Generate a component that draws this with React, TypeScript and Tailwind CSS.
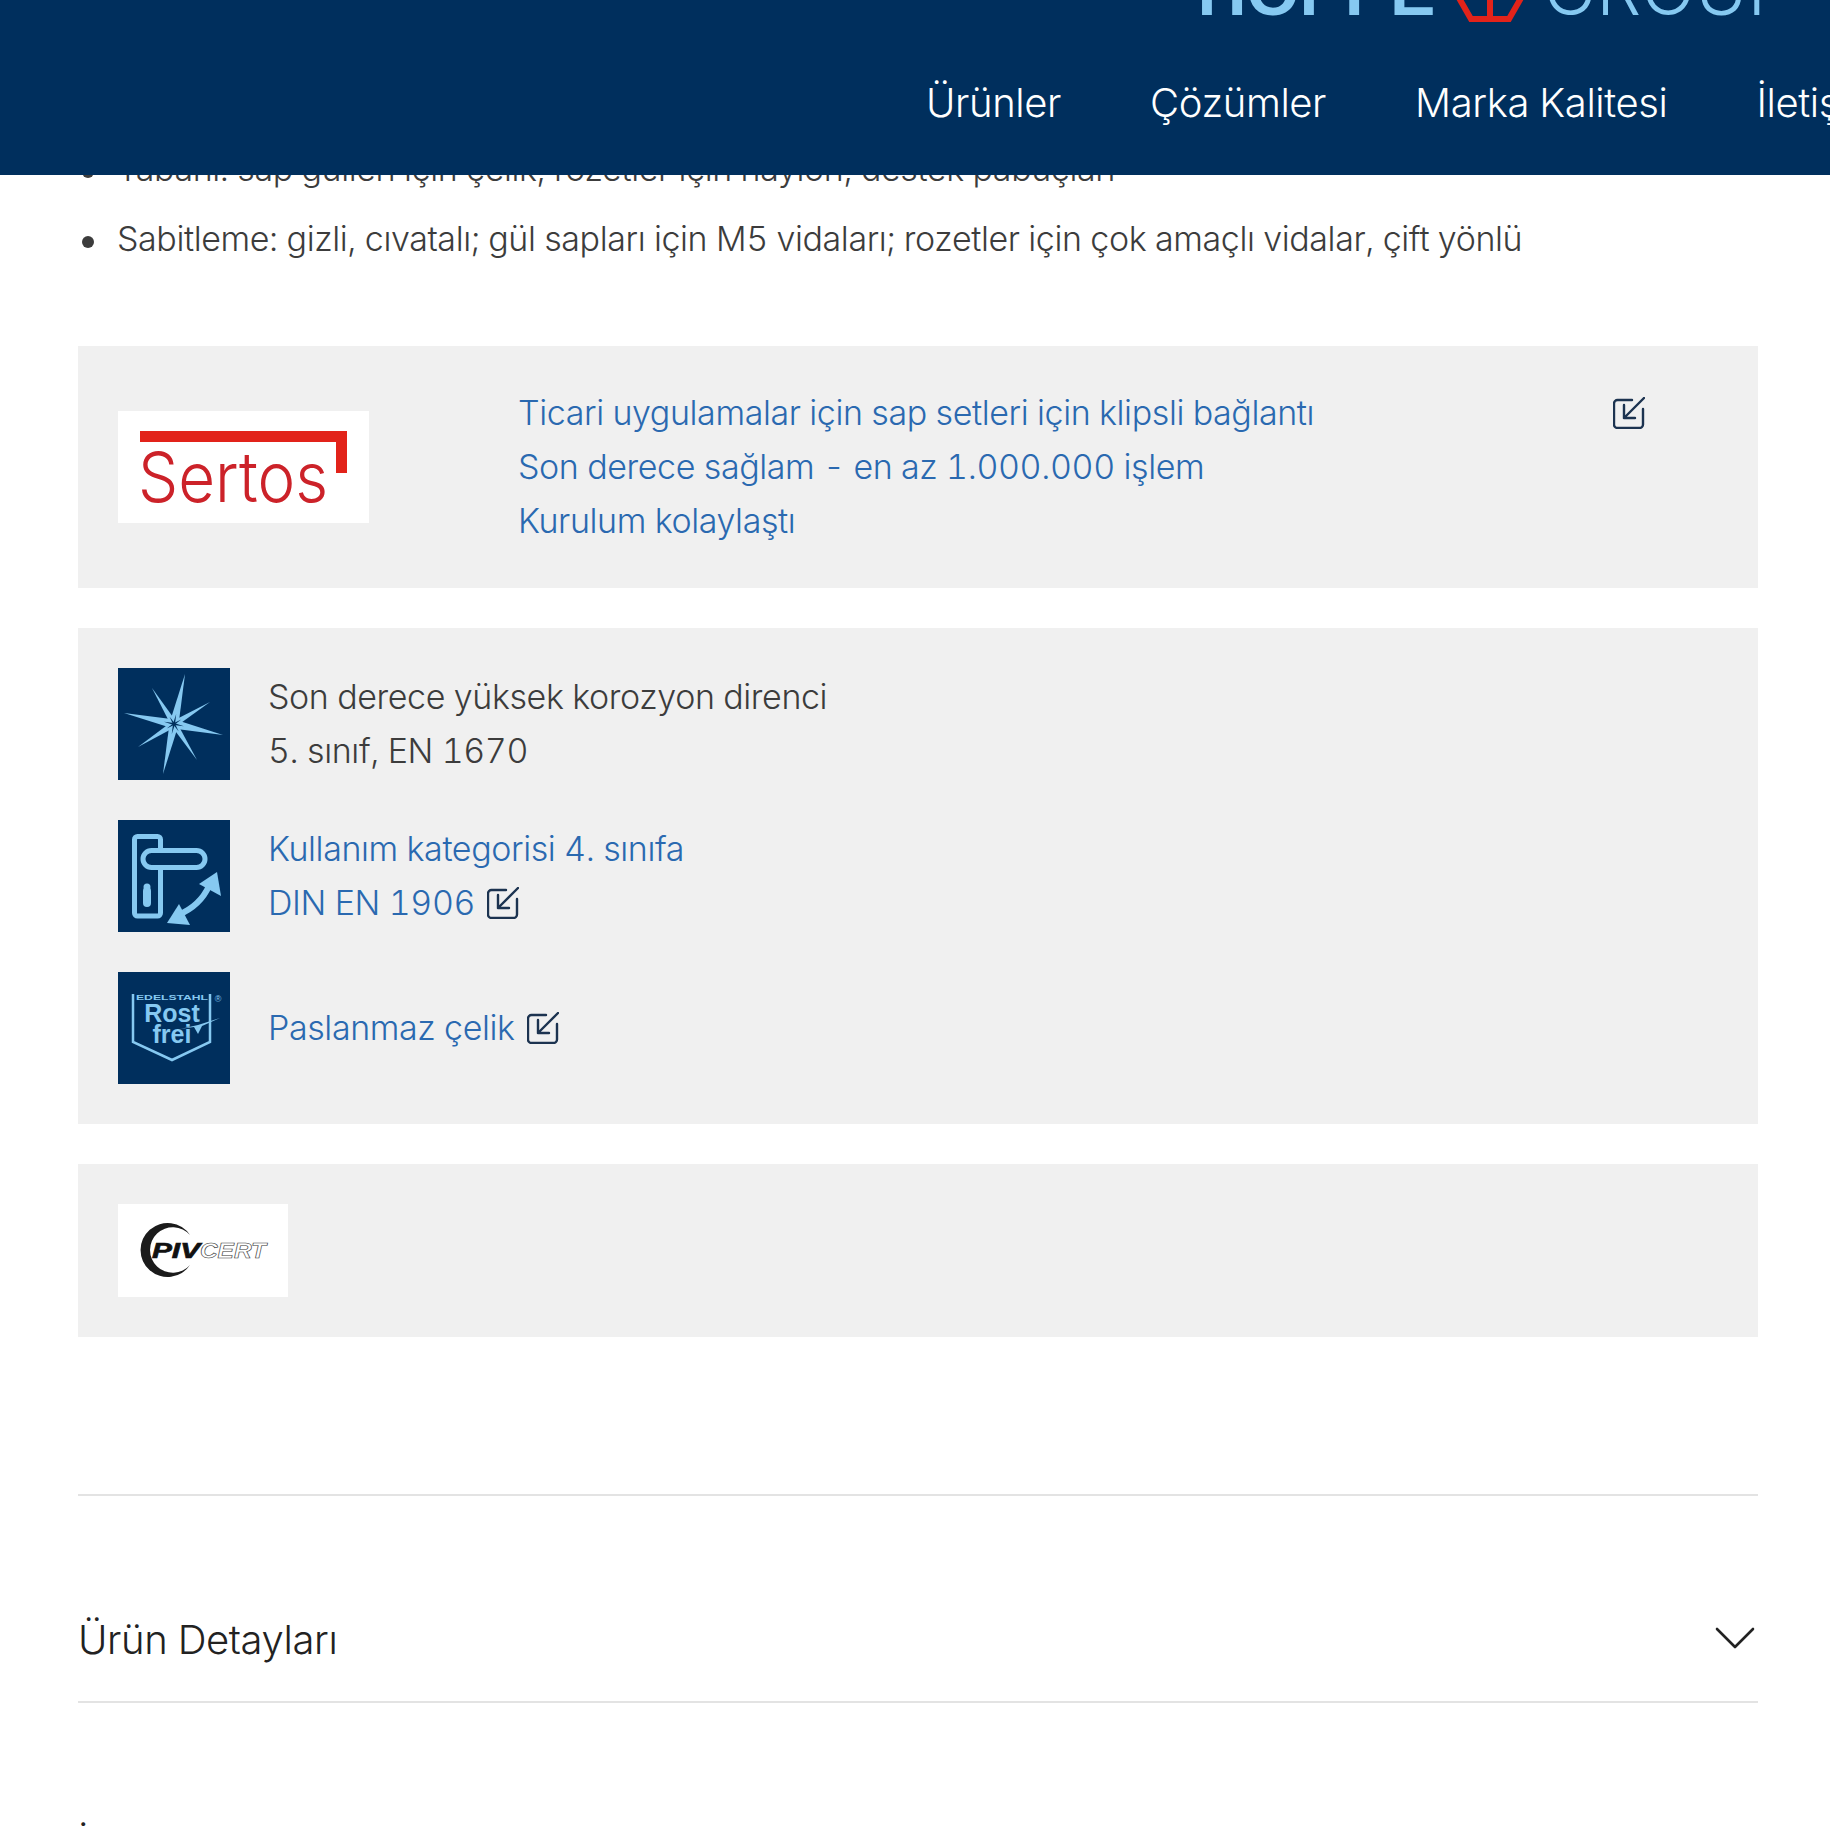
const bodyFont = "font-['Inter',sans-serif] font-light tracking-[-0.025em] tabular-nums"

function LinkIcon({ className = '' }: { className?: string }) {
  return (
    <svg viewBox="0 0 32 32" className={`h-8 w-8 shrink-0 ${className}`} fill="none" stroke="#1c3350" strokeWidth="2.4" strokeLinecap="round" strokeLinejoin="round">
      <path d="M19 3H4.500A3.500 3.500 0 0 0 1 6.500V27.500A3.500 3.500 0 0 0 4.500 31H26.500A3.500 3.500 0 0 0 30 27.500V12" />
      <path d="M31 1L11 21M11 8V21H22" />
    </svg>
  )
}

function SertosLogo() {
  return (
    <div className="h-[112px] w-[251px] shrink-0 bg-white tracking-normal">
      <svg viewBox="0 0 251 112" className="h-full w-full">
        <path d="M22 20H229V62H218V31H22Z" fill="#e2231a" />
        <text x="20" y="91" fontSize="70" fontFamily="Inter, sans-serif" fontWeight="300" fill="#cc2229" textLength="190" lengthAdjust="spacingAndGlyphs">Sertos</text>
      </svg>
    </div>
  )
}

function StarIcon() {
  const tips: [number, number, number][] = [
    [67, 6, 4.6],
    [92, 34, 3.2],
    [105, 67, 4.6],
    [79, 92, 3.2],
    [45, 106, 4.6],
    [20, 79, 3.2],
    [6, 45, 4.6],
    [34, 20, 3.2],
  ]
  const spike = (x: number, y: number, w: number, scale: number) => {
    const dx = x - 56
    const dy = y - 56
    const len = Math.hypot(dx, dy)
    const nx = (-dy / len) * w
    const ny = (dx / len) * w
    return `${56 + dx * scale},${56 + dy * scale} ${56 + nx},${56 + ny} ${56 - nx},${56 - ny}`
  }
  return (
    <div className="h-[112px] w-[112px] shrink-0 bg-[#002f5d]">
      <svg viewBox="0 0 112 112" className="h-full w-full">
        {tips.map(([x, y, w]) => (
          <polygon key={`${x}-${y}`} points={spike(x, y, w, 1)} fill="#86c9f1" />
        ))}
        {tips.map(([x, y]) => (
          <polygon key={`d${x}-${y}`} points={spike(x, y, 1, 0.2)} fill="#002f5d" />
        ))}
      </svg>
    </div>
  )
}

function HandleIcon() {
  return (
    <div className="h-[112px] w-[112px] shrink-0 bg-[#002f5d]">
      <svg viewBox="0 0 112 112" className="h-full w-full" fill="none" stroke="#86c9f1" strokeWidth="5" strokeLinejoin="round" strokeLinecap="round">
        <path d="M42.500 28V19.500A3 3 0 0 0 39.500 16.500H19.500A3 3 0 0 0 16.500 19.500V93A3 3 0 0 0 19.500 96H39.500A3 3 0 0 0 42.500 93V50" />
        <rect x="25" y="30.500" width="62" height="17" rx="8.500" />
        <path d="M29 71V83" strokeWidth="8" />
        <circle cx="29" cy="67" r="2.500" fill="#86c9f1" strokeWidth="2" />
        <path d="M60 95Q82 86 91 66" strokeWidth="6" strokeLinecap="butt" />
        <polygon points="49,103 72,105 61,84" fill="#86c9f1" stroke="none" />
        <polygon points="99,52 103,76 81,64" fill="#86c9f1" stroke="none" />
      </svg>
    </div>
  )
}

function RostfreiIcon() {
  return (
    <div className="h-[112px] w-[112px] shrink-0 bg-[#002f5d] tracking-normal">
      <svg viewBox="0 0 112 112" className="h-full w-full" fontFamily="'Liberation Sans', sans-serif" fill="#86c9f1">
        <path d="M15 22V70L54 88L92 70V22" fill="none" stroke="#86c9f1" strokeWidth="2.500" />
        <text x="54" y="28" fontSize="8" fontWeight="700" textAnchor="middle" textLength="72" lengthAdjust="spacingAndGlyphs">EDELSTAHL</text>
        <text x="100" y="30" fontSize="9" textAnchor="middle">®</text>
        <text x="54" y="50" fontSize="25" fontWeight="700" textAnchor="middle">Rost</text>
        <text x="54" y="71" fontSize="25" fontWeight="700" textAnchor="middle">frei</text>
        <polygon points="62,57 80,53 102,46 84,54 80,62 76,55" />
      </svg>
    </div>
  )
}

function PivcertLogo() {
  return (
    <div className="h-[93px] w-[170px] shrink-0 bg-white tracking-normal">
      <svg viewBox="0 0 170 93" className="h-full w-full">
        <path d="M72 31A27 27 0 1 0 72 61A22.800 22.800 0 1 1 72 31Z" fill="#1b1b1b" />
        <text x="34" y="54" fontSize="22" fontWeight="700" fontStyle="italic" fontFamily="'Liberation Sans', sans-serif" fill="#111" stroke="#111" strokeWidth="0.700" textLength="48" lengthAdjust="spacingAndGlyphs">PIV</text>
        <text x="82" y="54" fontSize="22" fontWeight="700" fontStyle="italic" fontFamily="'Liberation Sans', sans-serif" fill="#fff" stroke="#333" strokeWidth="0.600" textLength="66" lengthAdjust="spacingAndGlyphs">CERT</text>
      </svg>
    </div>
  )
}

const bullets = [
  'Tabanı: sap gülleri için çelik, rozetler için naylon, destek pabuçları',
  'Sabitleme: gizli, cıvatalı; gül sapları için M5 vidaları; rozetler için çok amaçlı vidalar, çift yönlü',
]

export default function App() {
  return (
    <div className={`relative h-[1828px] overflow-hidden bg-white ${bodyFont}`}>
      <header className="absolute inset-x-0 top-0 z-10 h-[175px] overflow-hidden bg-[#002f5d]">
        <div className="-mt-[39px] flex h-[64px] items-end justify-end pr-[38px]">
          <span className="font-['Liberation_Sans',sans-serif] text-[68px] leading-none font-bold tracking-normal text-[#86c9f1]">HOPPE</span>
          <svg viewBox="0 0 68 25" className="mr-[19px] ml-[21px] h-[25px] w-[68px] shrink-0" fill="none" stroke="#e2231a" strokeWidth="6">
            <path d="M3 -2L15 19H53L65 -2M34 -2V19" />
          </svg>
          <span className="text-[71px] leading-none tracking-normal text-[#86c9f1]">GROUP</span>
        </div>
        <nav className="mt-[53px] flex gap-[89px] pl-[926px] text-[40px] leading-[50px] whitespace-nowrap text-white">
          <a href="#">Ürünler</a>
          <a href="#">Çözümler</a>
          <a href="#">Marka Kalitesi</a>
          <a href="#">İletişim</a>
        </nav>
      </header>

      <main className="pt-[142px] pr-[72px] pl-[78px] text-[34px] leading-[54px] text-[#3c3c3c]">
        <ul className="flex flex-col gap-4">
          {bullets.map((item) => (
            <li key={item} className="flex gap-[23px] pl-1">
              <span className="mt-6 h-3 w-3 shrink-0 rounded-full bg-[#3c3c3c]" />
              {item}
            </li>
          ))}
        </ul>

        <section className="mt-[80px] flex items-center bg-[#f0f0f0] p-10 pr-[113px]">
          <SertosLogo />
          <a href="#" className="ml-[149px] flex-1 text-[#2a69b0]">
            <p>Ticari uygulamalar için sap setleri için klipsli bağlantı</p>
            <p>Son derece sağlam - en az 1.000.000 işlem</p>
            <p>Kurulum kolaylaştı</p>
          </a>
          <LinkIcon className="mt-[11px] self-start" />
        </section>

        <section className="mt-10 flex flex-col gap-10 bg-[#f0f0f0] p-10">
          <div className="flex items-center gap-[38px]">
            <StarIcon />
            <p>
              Son derece yüksek korozyon direnci
              <br />
              5. sınıf, EN 1670
            </p>
          </div>
          <div className="flex items-center gap-[38px]">
            <HandleIcon />
            <a href="#" className="text-[#2a69b0]">
              Kullanım kategorisi 4. sınıfa
              <span className="flex items-center gap-3">
                DIN EN 1906
                <LinkIcon />
              </span>
            </a>
          </div>
          <div className="flex items-center gap-[38px]">
            <RostfreiIcon />
            <a href="#" className="flex items-center gap-3 text-[#2a69b0]">
              Paslanmaz çelik
              <LinkIcon />
            </a>
          </div>
        </section>

        <section className="mt-10 bg-[#f0f0f0] p-10">
          <PivcertLogo />
        </section>

        <div className="mt-[157px] flex items-center justify-between border-y-2 border-[#e3e3e3] pt-[114px] pb-[31px]">
          <h2 className="text-[40px] leading-[60px] text-[#222]">Ürün Detayları</h2>
          <svg viewBox="0 0 40 22" className="mr-[3px] -mt-[4px] h-[22px] w-[40px]" fill="none" stroke="#222" strokeWidth="2.600" strokeLinecap="round" strokeLinejoin="round">
            <path d="M2 2L20 20L38 2" />
          </svg>
        </div>
        <h2 className="mt-[112px] text-[40px] leading-[60px] text-[#222]">İ</h2>
      </main>
    </div>
  )
}
